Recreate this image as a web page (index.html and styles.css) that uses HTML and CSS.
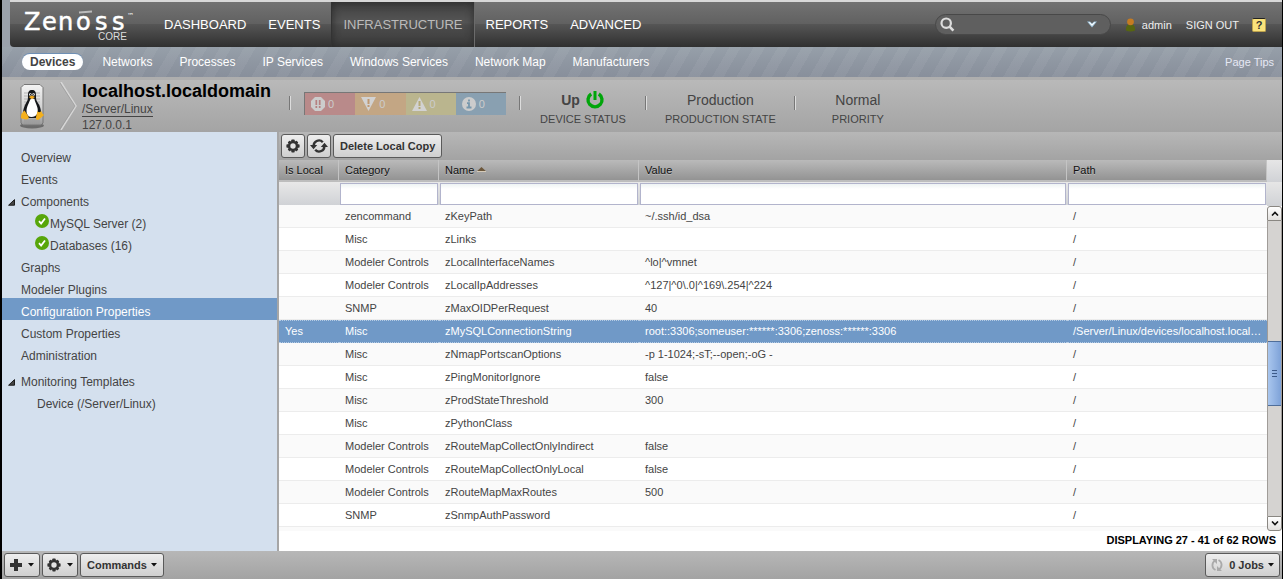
FILE: index.html
```html
<!DOCTYPE html>
<html lang="en">
<head>
<meta charset="utf-8">
<title>Zenoss Core - localhost.localdomain</title>
<link rel="stylesheet" href="styles.css">
</head>
<body>
<svg class="defs" width="0" height="0" aria-hidden="true">
  <symbol id="gear" viewBox="0 0 14 14">
    <g fill="currentColor"><rect x="5.3" y="0.4" width="3.4" height="13.2" rx=".8"/><rect x="0.4" y="5.3" width="13.2" height="3.4" rx=".8"/><rect x="5.5" y=".8" width="3" height="12.4" rx=".8" transform="rotate(45 7 7)"/><rect x="5.5" y=".8" width="3" height="12.4" rx=".8" transform="rotate(-45 7 7)"/><circle cx="7" cy="7" r="5"/></g>
    <circle cx="7" cy="7" r="2.7" fill="#e2e2e2"/>
  </symbol>
  <symbol id="check" viewBox="0 0 14 14">
    <circle cx="7" cy="7" r="7" fill="#57a60a"/><path d="M4 7.2l2.1 2.3 3.9-5" fill="none" stroke="#fff" stroke-width="1.8"/>
  </symbol>
  <symbol id="caret" viewBox="0 0 6 4"><path d="M0 0h6L3 3.6z" fill="#111"/></symbol>
  <symbol id="expanded" viewBox="0 0 7 7"><path d="M6.5 .6v5.6H.6z" fill="#444" stroke="#1c1c1c"/></symbol>
</svg>

<header class="topbar">
  <a class="logo" href="#" aria-label="Zenoss Core">
    <svg width="110" height="36" viewBox="0 0 110 36">
      <text x="0 18 34 52 71 88" y="24" font-size="24" fill="#fff" stroke="#fff" stroke-width=".5" font-family="DejaVu Sans, sans-serif">Zenoss</text>
      <text x="103" y="12" font-size="7" fill="#fff" font-family="DejaVu Sans, sans-serif">™</text>
      <text x="74" y="34" font-size="10" fill="#ddd" font-family="Liberation Sans, sans-serif">CORE</text>
      <path d="M55 6.500l13-1" stroke="#bbb" stroke-width="2"/>
    </svg>
  </a>
  <nav class="mainnav" aria-label="Main">
    <a href="#">DASHBOARD</a>
    <a href="#">EVENTS</a>
    <a href="#" class="current">INFRASTRUCTURE</a>
    <a href="#">REPORTS</a>
    <a href="#">ADVANCED</a>
  </nav>
  <div class="search">
    <svg width="15" height="15" viewBox="0 0 15 15"><circle cx="6.2" cy="6.2" r="4.7" fill="none" stroke="#ddd" stroke-width="2.2"/><path d="M9.6 9.6l3.8 4" stroke="#ddd" stroke-width="2.6"/></svg>
    <input type="text" aria-label="Search">
    <button type="button" aria-label="Search options"><svg width="10" height="7" viewBox="0 0 10 7"><path d="M0 .5h3l2 2 2-2h3L5 6.5z" fill="#9cc1d9"/><path d="M1.5 1.2h1.4L5 3.2l2.1-2h1.4L5 5z" fill="#fff"/></svg></button>
  </div>
  <a class="user" href="#">
    <svg width="11" height="14" viewBox="0 0 11 14"><path d="M1 12.5C.5 8 3 6 5.500 6s5 2 4.500 6.500Q5.500 14.500 1 12.500z" fill="#576510"/><circle cx="5.500" cy="3.800" r="3.400" fill="#c57b22"/></svg>
    admin
  </a>
  <a class="signout" href="#">SIGN OUT</a>
  <a class="help" href="#" aria-label="Help">?</a>
</header>

<nav class="subnav" aria-label="Infrastructure">
  <a href="#" class="current">Devices</a>
  <a href="#">Networks</a>
  <a href="#">Processes</a>
  <a href="#">IP Services</a>
  <a href="#">Windows Services</a>
  <a href="#">Network Map</a>
  <a href="#">Manufacturers</a>
  <a href="#" class="tips">Page Tips</a>
</nav>

<section class="device">
  <svg class="tux" width="28" height="46" viewBox="0 0 28 46">
    <defs><linearGradient id="srv" x2="0" y2="1"><stop offset="0" stop-color="#f4f4f4"/><stop offset=".6" stop-color="#d0d0d0"/><stop offset="1" stop-color="#999"/></linearGradient></defs>
    <ellipse cx="14" cy="42.500" rx="12" ry="3" fill="#444" opacity=".6"/>
    <path d="M6 1.500h16l3 3V40l-2 2H5l-2-2V4.500z" fill="url(#srv)" stroke="#777"/>
    <path d="M6 10h16M6 13h16M6 16h16M6 19h16M6 22h16M6 25h16M6 28h16" stroke="#b4b4b4"/>
    <path d="M7 36v5M9 36v5M11 36v5M13 36v5M15 36v5M17 36v5M19 36v5M21 36v5" stroke="#999"/>
    <path d="M14 7c-3 0-4 2-4 5 0 4 0 5-2 8-2 4-3 7-3 10l5 5h9l4-5c0-4-1-7-3-10s-2-4-2-8c0-3-1-5-4-5z" fill="#15171a"/>
    <path d="M13.500 15c-2 2-2 4-4 8-2 5-1 11 4 11s7-4 6-9c-1-4-3-7-3-9z" fill="#fff"/>
    <circle cx="12.300" cy="11.500" r="1.300" fill="#fff"/><circle cx="15.500" cy="11.500" r="1.300" fill="#fff"/><circle cx="12.500" cy="11.700" r=".6"/><circle cx="15.200" cy="11.700" r=".6"/>
    <path d="M10.800 14l3-1.500 3.200 1.500-3.200 2.300z" fill="#f0a818"/>
    <path d="M6.500 27.500l4 6c1 2-1 3.500-3 3-2-.8-4-.8-4.500-1.500-.3-1.500.3-2 .3-4 1.200-.5 1.700-3 3.200-3.500z" fill="#f4b01c"/>
    <path d="M19.500 28c1 2 3 1 4 0 0 2 1.500 3 2.500 4-1.500 2-4 3-5 4.500-2 1-3.500 0-3-2.500z" fill="#f4b01c"/>
  </svg>
  <svg class="chevron" width="18" height="48" viewBox="0 0 18 48"><path d="M1 0l15 24L1 48" fill="none" stroke="#d6d6d6" stroke-width="1.500"/><path d="M0 1l15 23L0 47" fill="none" stroke="#999" stroke-width=".7"/></svg>
  <div class="identity">
    <h1>localhost.localdomain</h1>
    <div><a href="#">/Server/Linux</a></div>
    <div>127.0.0.1</div>
  </div>
  <span class="sep"></span>
  <div class="severities">
    <span class="critical"><svg width="14" height="14" viewBox="0 0 14 14"><path d="M4 0h6l4 4v6l-4 4H4l-4-4V4z" fill="#ccc"/><path d="M5.300 3v5M8.700 3v5M5.300 9v2M8.700 9v2" stroke="#b58080" stroke-width="1.700"/></svg>0</span>
    <span class="error"><svg width="15" height="14" viewBox="0 0 15 14"><path d="M0 0h15L7.500 14z" fill="#d2d2d2"/><path d="M7.500 2v5M7.500 8v2" stroke="#c09870" stroke-width="2"/></svg>0</span>
    <span class="warning"><svg width="15" height="14" viewBox="0 0 15 14"><path d="M7.500 0L15 14H0z" fill="#d2d2d2"/><path d="M7.500 4v5M7.500 10v2" stroke="#b5aa78" stroke-width="2"/></svg>0</span>
    <span class="info"><svg width="14" height="14" viewBox="0 0 14 14"><circle cx="7" cy="7" r="7" fill="#ccc"/><path d="M7 2.500v2M5 6.200h2v4.800M4.500 10.500h5" fill="none" stroke="#7797ac" stroke-width="1.800"/></svg>0</span>
  </div>
  <span class="sep"></span>
  <div class="stat"><div class="value up">Up <svg width="20" height="20" viewBox="0 0 20 20"><path d="M6.200 4a7 7 0 1 0 7.600 0" fill="none" stroke="#00a50a" stroke-width="3.400"/><path d="M10 1v9" stroke="#00a50a" stroke-width="3"/></svg></div><div>DEVICE STATUS</div></div>
  <span class="sep"></span>
  <div class="stat"><div class="value">Production</div><div>PRODUCTION STATE</div></div>
  <span class="sep"></span>
  <div class="stat"><div class="value">Normal</div><div>PRIORITY</div></div>
</section>

<div class="workspace">
  <nav class="sidebar" aria-label="Device">
    <a href="#">Overview</a>
    <a href="#">Events</a>
    <a href="#" class="parent"><svg width="7" height="7"><use href="#expanded"/></svg>Components</a>
    <a href="#" class="component"><svg width="14" height="14"><use href="#check"/></svg>MySQL Server (2)</a>
    <a href="#" class="component"><svg width="14" height="14"><use href="#check"/></svg>Databases (16)</a>
    <a href="#">Graphs</a>
    <a href="#">Modeler Plugins</a>
    <a href="#" class="current">Configuration Properties</a>
    <a href="#">Custom Properties</a>
    <a href="#">Administration</a>
    <a href="#" class="parent group"><svg width="7" height="7"><use href="#expanded"/></svg>Monitoring Templates</a>
    <a href="#" class="child">Device (/Server/Linux)</a>
  </nav>

  <main class="content">
    <div class="toolbar">
      <button type="button" class="btn icon" aria-label="Configure"><svg width="14" height="14"><use href="#gear"/></svg></button>
      <button type="button" class="btn icon" aria-label="Refresh"><svg width="18" height="14" viewBox="0 0 18 14"><path d="M3.800 7.500A5.200 5.200 0 0 1 12.800 3.200M14.200 6.500A5.200 5.200 0 0 1 5.200 10.800" fill="none" stroke="#333" stroke-width="2.400"/><path d="M0 6h7.200L3.500 10.200zM10.800 8H18L14.500 3.800z" fill="#333"/></svg></button>
      <button type="button" class="btn">Delete Local Copy</button>
    </div>
    <div class="grid">
      <div class="tablewrap">
        <table>
          <colgroup><col class="c-local"><col class="c-category"><col class="c-name"><col><col class="c-path"></colgroup>
          <thead>
            <tr class="titles"><th>Is Local</th><th>Category</th><th aria-sort="ascending">Name <svg width="9" height="5" viewBox="0 0 9 5"><path d="M0 4.200L4.500 0 9 4.200z" fill="#6c573b"/><path d="M0 4.600h9" stroke="#eee0cc" stroke-width=".8"/></svg></th><th>Value</th><th>Path</th></tr>
            <tr class="filters"><td></td><td><input type="text" aria-label="Filter by category"></td><td><input type="text" aria-label="Filter by name"></td><td><input type="text" aria-label="Filter by value"></td><td><input type="text" aria-label="Filter by path"></td></tr>
          </thead>
          <tbody>
            <tr><td></td><td>zencommand</td><td>zKeyPath</td><td>~/.ssh/id_dsa</td><td>/</td></tr>
            <tr><td></td><td>Misc</td><td>zLinks</td><td></td><td>/</td></tr>
            <tr><td></td><td>Modeler Controls</td><td>zLocalInterfaceNames</td><td>^lo|^vmnet</td><td>/</td></tr>
            <tr><td></td><td>Modeler Controls</td><td>zLocalIpAddresses</td><td>^127|^0\.0|^169\.254|^224</td><td>/</td></tr>
            <tr><td></td><td>SNMP</td><td>zMaxOIDPerRequest</td><td>40</td><td>/</td></tr>
            <tr class="selected"><td>Yes</td><td>Misc</td><td>zMySQLConnectionString</td><td>root::3306;someuser:******:3306;zenoss:******:3306</td><td>/Server/Linux/devices/localhost.local…</td></tr>
            <tr><td></td><td>Misc</td><td>zNmapPortscanOptions</td><td>-p 1-1024;-sT;--open;-oG -</td><td>/</td></tr>
            <tr><td></td><td>Misc</td><td>zPingMonitorIgnore</td><td>false</td><td>/</td></tr>
            <tr><td></td><td>Misc</td><td>zProdStateThreshold</td><td>300</td><td>/</td></tr>
            <tr><td></td><td>Misc</td><td>zPythonClass</td><td></td><td>/</td></tr>
            <tr><td></td><td>Modeler Controls</td><td>zRouteMapCollectOnlyIndirect</td><td>false</td><td>/</td></tr>
            <tr><td></td><td>Modeler Controls</td><td>zRouteMapCollectOnlyLocal</td><td>false</td><td>/</td></tr>
            <tr><td></td><td>Modeler Controls</td><td>zRouteMapMaxRoutes</td><td>500</td><td>/</td></tr>
            <tr><td></td><td>SNMP</td><td>zSnmpAuthPassword</td><td></td><td>/</td></tr>
            <tr><td></td><td></td><td></td><td></td><td></td></tr>
          </tbody>
        </table>
      </div>
      <div class="rail">
        <div class="corner"></div>
        <button type="button" class="arrow" aria-label="Scroll up"><svg width="8" height="5" viewBox="0 0 8 5"><path d="M1 4.500l3-3 3 3" fill="none" stroke="#111" stroke-width="1.600"/></svg></button>
        <div class="track"><div class="thumb"><i></i><i></i><i></i></div></div>
        <button type="button" class="arrow" aria-label="Scroll down"><svg width="8" height="5" viewBox="0 0 8 5"><path d="M1 .5l3 3 3-3" fill="none" stroke="#111" stroke-width="1.600"/></svg></button>
      </div>
    </div>
    <div class="paging">DISPLAYING 27 - 41 of 62 ROWS</div>
  </main>
</div>

<footer class="footer">
  <button type="button" class="btn menu" aria-label="Add"><svg width="12" height="12" viewBox="0 0 12 12"><path d="M4 0h4v4h4v4H8v4H4V8H0V4h4z" fill="#333"/></svg><svg width="6" height="4"><use href="#caret"/></svg></button>
  <button type="button" class="btn menu" aria-label="Actions"><svg width="14" height="14"><use href="#gear"/></svg><svg width="6" height="4"><use href="#caret"/></svg></button>
  <button type="button" class="btn">Commands<svg width="6" height="4"><use href="#caret"/></svg></button>
  <button type="button" class="btn jobs"><svg width="12" height="14" viewBox="0 0 12 14"><path d="M4.500 12C.5 10 .5 5 4 2.500M7.500 2C11.500 4 11.500 9 8 11.500" fill="none" stroke="#aaa" stroke-width="1.800"/><path d="M1 1h5v5zM11 13H6V8z" fill="#aaa"/></svg><span>0 Jobs</span><svg width="6" height="4"><use href="#caret"/></svg></button>
</footer>
</body>
</html>
```
FILE: styles.css
```css
* { box-sizing: border-box; }
body {
  margin: 0;
  height: 100vh;
  display: flex;
  flex-direction: column;
  overflow: hidden;
  border: solid #000;
  border-width: 0 1px 0 2px;
  background: #9aa1ab;
  color: #444;
  font: 11px "Liberation Sans", Arial, sans-serif;
}
a { color: inherit; text-decoration: none; }
button, input { font: inherit; color: inherit; }
svg { flex: none; }
.defs { position: absolute; }

/* Top bar */
.topbar {
  flex: none;
  display: flex;
  align-items: center;
  height: 47px;
  margin-left: 8px;
  padding-right: 16px;
  border-top: 2px solid #d8d8d8;
  border-bottom-left-radius: 4px;
  background: linear-gradient(#727272, #616161 48%, #555 50%, #303030);
  color: #fff;
}
.logo { display: flex; margin: 0 19px 2px 14px; }
.mainnav { display: flex; align-self: stretch; font-size: 13px; }
.mainnav a { display: flex; align-items: center; padding: 0 11px; }
.mainnav .current {
  border-right: 1px solid #6b6b6b;
  border-left: 1px solid #333;
  background: linear-gradient(#404040, #555 45%, #4c4c4c 52%, #3a3a3a);
  box-shadow: inset 0 0 8px #2a2a2a;
  color: #bbb;
}
.search {
  display: flex;
  align-items: center;
  width: 176px;
  height: 21px;
  margin: 0 14px 0 auto;
  padding: 0 13px 0 4px;
  border: 1px solid #484848;
  border-radius: 11px;
  background: #5f5f5f;
}
.search input { flex: 1; min-width: 0; border: 0; background: none; outline: 0; color: #fff; }
.search button { display: flex; padding: 0; border: 0; background: none; }
.user { display: flex; align-items: center; gap: 6px; margin-right: 14px; color: #eee; }
.signout { margin-right: 13px; color: #eee; }
.help {
  width: 14px;
  height: 14px;
  border: 1px solid #bda24d;
  border-top-color: #222;
  border-radius: 2px;
  background: #fbe37b;
  color: #333;
  font-weight: bold;
  line-height: 12px;
  text-align: center;
}

/* Second-level navigation */
.subnav {
  flex: none;
  display: flex;
  align-items: center;
  gap: 11px;
  height: 30px;
  padding: 0 8px 0 20px;
  background:
    repeating-linear-gradient(120deg, rgba(255, 255, 255, .05) 0 10px, transparent 10px 21px),
    linear-gradient(#969fa9, #888f9b);
  color: #fff;
  font-size: 12px;
}
.subnav a { padding: 0 8px; line-height: 16px; }
.subnav .current { border-radius: 8px; background: #fff; box-shadow: 0 -1px #6e8fb4; color: #444; font-weight: bold; }
.subnav .tips { margin-left: auto; padding-right: 0; color: #e6e8f4; font-size: 11px; }

/* Device summary */
.device {
  flex: none;
  display: flex;
  align-items: center;
  height: 55px;
  padding-left: 16px;
  border-top: 3px solid #aeaeae;
  background: linear-gradient(#b9b9b9, #a4a4a4);
}
.chevron { margin-left: 14px; }
.identity { margin-left: 4px; width: 207px; font-size: 12px; line-height: 16px; }
.identity h1 { margin: 0; padding-top: 2px; color: #000; font-size: 18px; line-height: 20px; }
.identity a { border-bottom: 1px solid #444; }
.sep { flex: none; width: 2px; height: 14px; margin-bottom: 6px; border-left: 1px solid #777; border-right: 1px solid #ddd; }
.severities {
  display: flex;
  width: 202px;
  height: 23px;
  margin: 0 13px 6px;
  border-top: 1px solid #777;
  border-left: 1px solid #777;
  color: #ccc;
}
.severities span { flex: 1; display: flex; align-items: center; gap: 3px; padding-left: 6px; }
.critical { background: #b98a8a; }
.error { background: #c3a684; }
.warning { background: #bab58e; }
.info { background: #89a0b1; }
.stat { min-width: 124px; padding: 4px 18px 0; line-height: 16px; text-align: center; white-space: nowrap; }
.stat .value { display: flex; justify-content: center; align-items: center; gap: 5px; height: 22px; font-size: 14px; }
.stat .up { font-weight: bold; }

/* Workspace */
.workspace { flex: 1; min-height: 0; display: flex; }
.sidebar {
  flex: none;
  width: 277px;
  padding-top: 12px;
  border-right: 2px solid #a6a6a6;
  background: #d4e0ee;
  font-size: 12px;
}
.sidebar a { display: flex; align-items: center; height: 22px; padding: 6px 0 0 19px; }
.sidebar .parent { gap: 6px; padding-left: 6px; }
.sidebar .component { padding-left: 33px; gap: 1px; }
.sidebar .component svg { margin-bottom: 6px; }
.sidebar .child { padding-left: 35px; }
.sidebar .group { margin-top: 4px; }
.sidebar .current { background: #7099c7; color: #fff; }

.content { flex: 1; min-width: 0; display: flex; flex-direction: column; background: #fff; }
.toolbar { flex: none; display: flex; gap: 2px; height: 28px; padding: 2px; background: linear-gradient(#b7b7b7, #a3a3a3); }
.btn {
  display: flex;
  align-items: center;
  justify-content: center;
  gap: 4px;
  height: 24px;
  padding: 0 6px;
  border: 1px solid #5a5a5a;
  border-radius: 3px;
  background: linear-gradient(#eee, #cfcfcf);
  color: #333;
  font-weight: bold;
}
.btn.icon { width: 24px; padding: 0; }

/* Property grid */
.grid { flex: 1; min-height: 0; display: flex; }
.tablewrap { flex: 1; min-width: 0; overflow: hidden; }
table { width: 100%; border-collapse: separate; border-spacing: 0; table-layout: fixed; }
.c-local { width: 60px; }
.c-category { width: 100px; }
.c-name, .c-path { width: 200px; }
th { height: 22px; padding: 0 6px; border-right: 1px solid #c4c4c4; border-bottom: 2px solid #bdbdbd; background: linear-gradient(#bababa, #939393); color: #111; font-weight: normal; text-align: left; text-shadow: 0 1px #bbb; }
th svg { vertical-align: 2px; }
td { height: 23px; padding: 0 0 0 6px; overflow: hidden; border-bottom: 1px solid #ececec; text-overflow: ellipsis; white-space: nowrap; }
.filters td { padding: 0 1px; border: 0; background: linear-gradient(#e8e8e8, #d0d2d6); }
.filters input { display: block; width: 100%; height: 22px; padding: 0 4px; border: 1px solid #b2b4cc; background: linear-gradient(#eef3f3, #fff 5px); }
tbody tr:nth-child(odd) { background: #fafafa; }
tbody .selected { background: #7099c7; color: #fff; }
.selected td { padding-bottom: 1px; border-top: 1px dotted #b5cbe4; border-bottom: 1px dotted #b5cbe4; }

.rail { flex: none; display: flex; flex-direction: column; width: 15px; }
.corner { height: 46px; background: linear-gradient(#e6e6e6, #d0d2d6 22px, #e6e6e6 22px, #d0d2d6); }
.arrow { display: flex; align-items: center; justify-content: center; width: 15px; height: 15px; padding: 0; border: 1px solid #8a8782; border-radius: 3px 3px 0 0; background: linear-gradient(#fff, #e2e0de); }
.track + .arrow { border-radius: 0 0 3px 3px; }
.track { flex: 1; display: flex; flex-direction: column; border: solid #a09c98; border-width: 0 1px; background: #d5d3d1; }
.track::before { content: ""; flex: 120; }
.track::after { content: ""; flex: 110; }
.thumb { flex: 63; display: flex; flex-direction: column; align-items: center; justify-content: center; gap: 2px; border: solid #4f6e9a; border-width: 1px 0; background: linear-gradient(90deg, #a9c6ee, #7ea2d8); }
.thumb i { width: 5px; height: 1px; background: #3c5a88; }
.paging { flex: none; height: 20px; padding-right: 6px; color: #000; font-weight: bold; line-height: 19px; text-align: right; }

/* Footer */
.footer { flex: none; display: flex; gap: 2px; height: 28px; padding: 2px; background: linear-gradient(#b7b7b7, #a3a3a3); }
.footer .menu { width: 36px; gap: 6px; padding: 0; }
.footer .jobs { margin-left: auto; padding: 0 5px; }
.footer .jobs span { padding-left: 2px; }
```
